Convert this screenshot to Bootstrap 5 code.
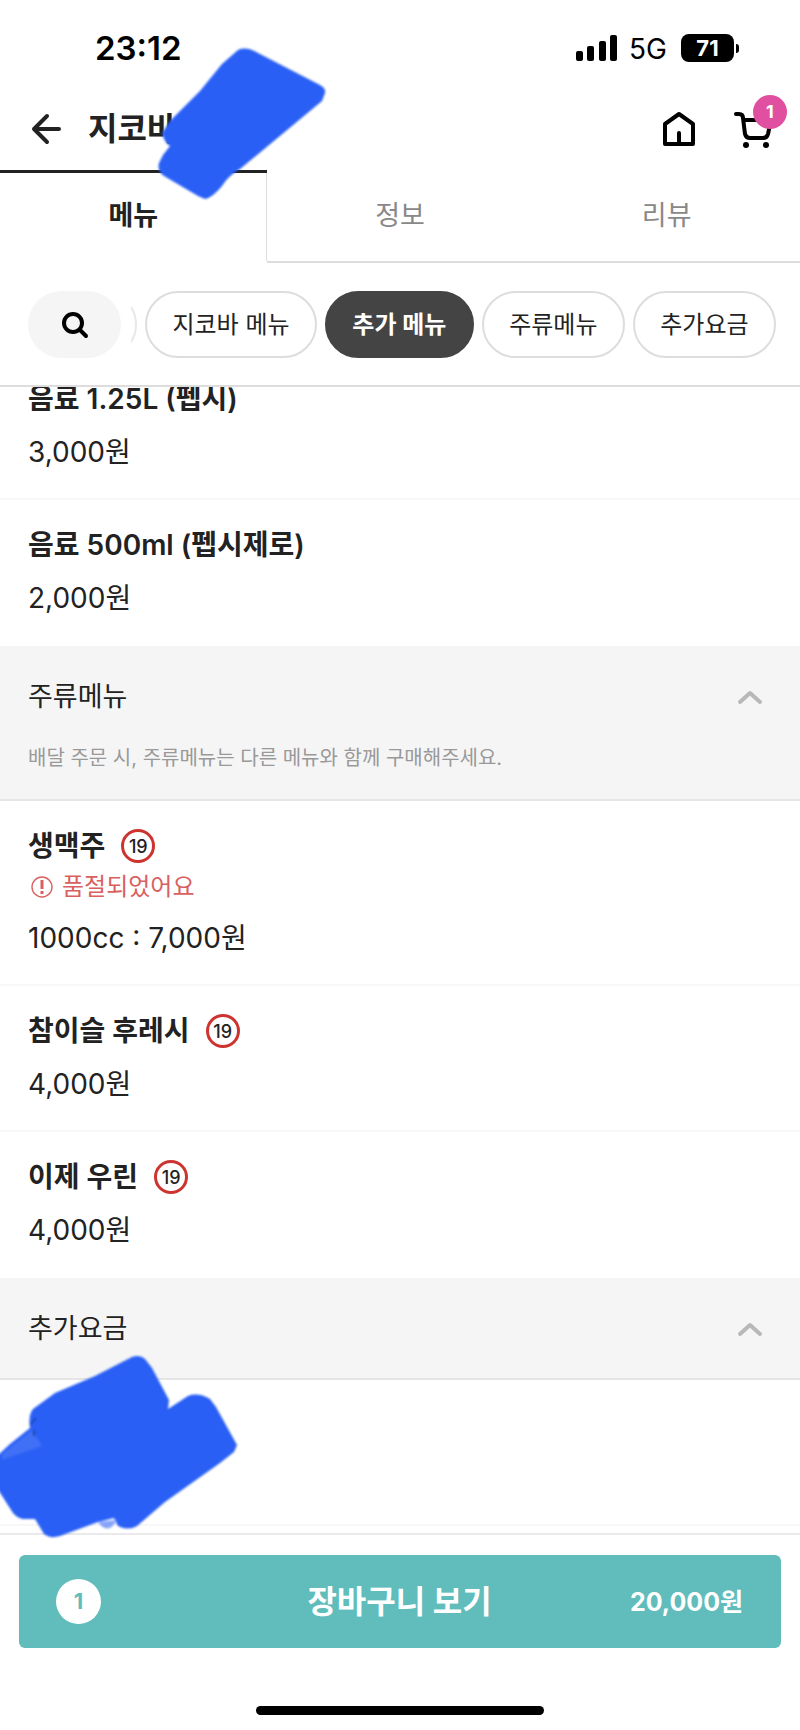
<!DOCTYPE html>
<html lang="ko">
<head>
<meta charset="utf-8">
<meta name="viewport" content="width=device-width, initial-scale=1">
<title>지코바 메뉴</title>
<link rel="stylesheet" href="https://cdn.jsdelivr.net/npm/bootstrap@5.3.0/dist/css/bootstrap.min.css">
<style>
  :root { --ink: #222; --line: #ddd; --soft: #f5f5f5; --teal: #60bdbb; --scribble: #295ff5; }
  body { font-family: Inter, "Noto Sans CJK KR", sans-serif; color: var(--ink); background: #fff; overflow-x: hidden; }
  a { color: inherit; text-decoration: none; }
  .status-bar { height: 90px; padding: 6px 61px 0 95px; color: #000; }
  .clock { font-size: 33px; line-height: 40px; font-weight: 600; }
  .network { font-size: 28px; line-height: 32px; margin: 2px 14px 0 12px; }
  .battery { width: 53px; height: 28px; border-radius: 8px; background: #000; color: #fff; font-size: 22px; line-height: 28px; font-weight: 700; }
  .battery-tip { width: 3px; height: 9px; border-radius: 0 4px 4px 0; background: #000; margin-left: 2px; }
  .title-bar { height: 80px; padding: 0 25px 2px 28px; }
  .shop-name { font-size: 32px; line-height: 40px; font-weight: 700; }
  .icon-btn { display: block; padding: 0; border: 0; background: none; color: #000; line-height: 0; }
  .cart-link { margin-left: 37px; }
  .cart-count { position: absolute; left: 20px; top: -15px; width: 34px; height: 34px; border-radius: 50%; background: #e04fa0; color: #fff; font-size: 18px; line-height: 34px; font-weight: 700; text-align: center; }
  .scribble { position: absolute; overflow: visible; pointer-events: none; z-index: 3; filter: blur(1px); }
  .scribble-name { left: 158px; top: 48px; }
  .scribble-dish { left: 0; top: -26px; }
  .scribble .ink { fill: var(--scribble); }
  .tab-link { flex: 1 1 0; height: 93px; font-size: 27px; line-height: 86px; text-align: center; color: #888; border-bottom: 2px solid var(--line); border-top: 3px solid transparent; }
  .tab-link.active { color: var(--ink); font-weight: 700; border-top-color: var(--ink); border-bottom-color: transparent; box-shadow: inset -1px 0 var(--line); }
  .filters { position: relative; z-index: 1; background: #fff; padding: 28px 24px 27px 28px; border-bottom: 2px solid var(--line); }
  .chip { height: 67px; padding: 0 23px; border: 2px solid var(--line); border-radius: 34px; background: #fff; color: var(--ink); font-size: 24px; line-height: 60px; white-space: nowrap; flex: 1 1 auto; }
  .chip.active { background: #444; border-color: #444; color: #fff; font-weight: 700; }
  .search-btn { width: 93px; height: 67px; border: 0; border-radius: 34px; background: var(--soft); flex: none; padding: 0; }
  .chip-edge { width: 6px; margin-left: 10px; flex: none; overflow: hidden; }
  .chip-edge span { flex: none; width: 80px; height: 67px; border: 2px solid #e8e8e8; border-radius: 34px; }
  .menu-list { margin-top: -33px; }
  .dish { padding: 25px 28px 26px; border-bottom: 2px solid #f7f7f7; }
  .dish:last-child { border-bottom: 0; padding-bottom: 28px; }
  .dish-name { font-size: 28px; line-height: 40px; font-weight: 600; margin: 0; }
  .dish-price { font-size: 28px; line-height: 40px; margin: 13px 0 0; }
  .sold-out { font-size: 24px; line-height: 40px; color: #d9605f; gap: 9px; padding: 1px 0 0 3px; }
  .sold-out + .dish-price { margin-top: 11px; }
  .adult { width: 34px; height: 34px; border: 3px solid #cd3430; border-radius: 50%; font-size: 18px; line-height: 29px; font-weight: 500; text-align: center; margin-left: 16px; }
  .group-head { display: block; width: 100%; border: 0; background: var(--soft); border-bottom: 2px solid #e5e5e5; padding: 31px 36px 29px 28px; text-align: left; color: var(--ink); font-size: 27px; line-height: 40px; }
  .group-note { font-size: 20px; line-height: 30px; color: #999; margin: 26px 0 0; display: block; }
  .group-head.with-note { padding-bottom: 26px; }
  .redacted { position: relative; height: 146px; border-bottom: 2px solid #f7f7f7; }
  .order-bar { margin-top: 7px; border-top: 2px solid #eaeaea; padding: 20px 19px 15px; }
  .order-btn { width: 100%; height: 93px; border: 0; border-radius: 6px; background: var(--teal); color: #fff; font-weight: 700; padding: 0 38px 0 37px; display: grid; grid-template-columns: 1fr auto 1fr; align-items: center; }
  .order-count { width: 45px; height: 45px; border-radius: 50%; background: #fff; color: var(--teal); font-size: 22px; line-height: 45px; }
  .order-label { font-size: 32px; line-height: 40px; }
  .order-total { font-size: 25px; line-height: 40px; text-align: right; }
  .home-bar { width: 36vw; height: 9px; border-radius: 5px; background: #000; margin: 58px auto 0; }
</style>
</head>
<body>
<header class="position-relative">
  <div class="status-bar d-flex align-items-center justify-content-between">
    <span class="clock">23:12</span>
    <div class="d-flex align-items-center">
      <svg width="41" height="26" viewBox="0 0 41 26" aria-hidden="true"><rect x="0" y="16" width="7" height="10" rx="2"/><rect x="11" y="11" width="7" height="15" rx="2"/><rect x="23" y="6" width="7" height="20" rx="2"/><rect x="34" y="0" width="7" height="26" rx="2"/></svg>
      <span class="network">5G</span>
      <span class="battery text-center">71</span><span class="battery-tip"></span>
    </div>
  </div>
  <div class="title-bar d-flex align-items-center">
    <button class="icon-btn" type="button" aria-label="뒤로">
      <svg width="36" height="36" viewBox="0 0 36 36" fill="none" stroke="#222" stroke-width="4" stroke-linecap="round" stroke-linejoin="round"><path d="M31 18H6M19 5 6 18l13 13"/></svg>
    </button>
    <h1 class="shop-name mb-0 ms-4">지코바</h1>
    <a class="icon-btn ms-auto" href="#" aria-label="홈">
      <svg width="34" height="36" viewBox="0 0 34 36" fill="none" stroke="currentColor" stroke-width="4" stroke-linecap="round" stroke-linejoin="round"><path d="M3 13 17 3l14 10v20H3zM17 22v10"/></svg>
    </a>
    <a class="icon-btn cart-link position-relative" href="#" aria-label="장바구니">
      <svg width="42" height="38" viewBox="0 0 42 38" fill="none" stroke="currentColor" stroke-width="4" stroke-linecap="round" stroke-linejoin="round"><path d="M3 4h3q4 0 4 4l2 16q1 4 5 4h13q4 0 5-4l3-14H11"/><circle cx="13" cy="35" r="3" fill="currentColor" stroke="none"/><circle cx="33" cy="35" r="3" fill="currentColor" stroke="none"/></svg>
      <span class="cart-count">1</span>
    </a>
  </div>
  <svg class="scribble scribble-name" width="168" height="152" viewBox="158 48 168 152" aria-hidden="true"><path class="ink" d="M238 50Q246 46 258 53L320 85Q326 88 325 93L322 101 240 169Q228 176 222 186 212 198 205 199L198 196 164 176Q157 171 159 163L163 155 170 146Q165 144 162 133L170 121 200 91 222 64Z"/></svg>
  <nav class="d-flex" aria-label="가게 탭">
    <a class="tab-link active" href="#">메뉴</a>
    <a class="tab-link" href="#">정보</a>
    <a class="tab-link" href="#">리뷰</a>
  </nav>
</header>

<div class="filters d-flex">
  <button class="search-btn" type="button" aria-label="검색">
    <svg width="28" height="28" viewBox="0 0 28 28" fill="none" stroke="#000" stroke-width="4" stroke-linecap="round"><circle cx="12" cy="12" r="9"/><path d="m19 19 6 6"/></svg>
  </button>
  <div class="chip-edge d-flex justify-content-end"><span></span></div>
  <div class="d-flex flex-grow-1 gap-2 ms-2">
    <button class="chip" type="button">지코바 메뉴</button>
    <button class="chip active" type="button">추가 메뉴</button>
    <button class="chip" type="button">주류메뉴</button>
    <button class="chip" type="button">추가요금</button>
  </div>
</div>

<main>
  <section class="menu-list">
    <article class="dish"><h2 class="dish-name">음료 1.25L (펩시)</h2><p class="dish-price">3,000원</p></article>
    <article class="dish"><h2 class="dish-name">음료 500ml (펩시제로)</h2><p class="dish-price">2,000원</p></article>
  </section>
  <section>
    <button class="group-head with-note" type="button">
      <span class="d-flex justify-content-between align-items-center">주류메뉴
        <svg width="28" height="18" viewBox="0 0 28 18" fill="none" stroke="#b8b8b8" stroke-width="4" stroke-linecap="round" stroke-linejoin="round"><path d="m4 14 10-9 10 9"/></svg></span>
      <span class="group-note">배달 주문 시, 주류메뉴는 다른 메뉴와 함께 구매해주세요.</span>
    </button>
    <article class="dish">
      <h2 class="dish-name d-flex align-items-center">생맥주<span class="adult">19</span></h2>
      <div class="sold-out d-flex align-items-center"><svg width="22" height="22" viewBox="0 0 22 22" fill="none" stroke="currentColor" aria-hidden="true"><circle cx="11" cy="11" r="10" stroke-width="1.4"/><path d="M11 4v9M11 15v3" stroke-width="3"/></svg><span>품절되었어요</span></div>
      <p class="dish-price">1000cc : 7,000원</p>
    </article>
    <article class="dish"><h2 class="dish-name d-flex align-items-center">참이슬 후레시<span class="adult">19</span></h2><p class="dish-price">4,000원</p></article>
    <article class="dish"><h2 class="dish-name d-flex align-items-center">이제 우린<span class="adult">19</span></h2><p class="dish-price">4,000원</p></article>
  </section>
  <section>
    <button class="group-head" type="button">
      <span class="d-flex justify-content-between align-items-center">추가요금
        <svg width="28" height="18" viewBox="0 0 28 18" fill="none" stroke="#b8b8b8" stroke-width="4" stroke-linecap="round" stroke-linejoin="round"><path d="m4 14 10-9 10 9"/></svg></span>
    </button>
    <article class="redacted">
      <svg class="scribble scribble-dish" width="238" height="184" viewBox="0 1354 238 184" aria-hidden="true"><path class="ink" d="M-3 1456 10 1444 30 1428Q28 1415 33 1409L55 1393 95 1376 132 1357Q140 1354 145 1359L152 1368 169 1400 168 1409 188 1396Q198 1392 210 1399L216 1407 237 1445 234 1452 220 1463 165 1502 137 1526Q128 1531 118 1526L114 1518 98 1522 60 1536Q50 1539 44 1534L35 1519 23 1519Q17 1518 13 1513L-3 1488Z"/><path d="M2 1454 32 1430 42 1446 2 1460z" fill="#3f70f6"/><path d="m30 1425 6-7M34 1430v6" fill="none" stroke="#17286e" stroke-width="1"/><path d="M98 1522q10 14 19-2z" fill="#86a4f9"/></svg>
    </article>
  </section>
</main>

<footer class="order-bar">
  <button class="order-btn" type="button">
    <span class="order-count">1</span>
    <span class="order-label">장바구니 보기</span>
    <span class="order-total">20,000원</span>
  </button>
  <div class="home-bar"></div>
</footer>
<script src="https://cdn.jsdelivr.net/npm/bootstrap@5.3.0/dist/js/bootstrap.bundle.min.js"></script>
</body>
</html>
